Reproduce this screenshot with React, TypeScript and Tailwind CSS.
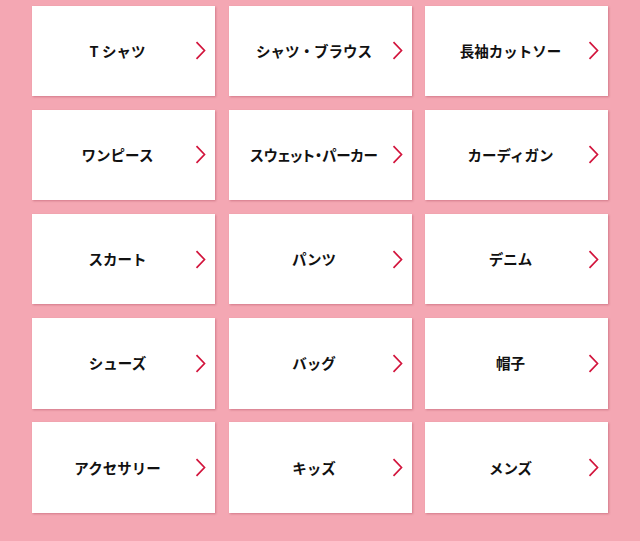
import React from "react";

const items: { t: string; palt?: boolean }[] = [
  { t: "T シャツ" },
  { t: "シャツ・ブラウス" },
  { t: "長袖カットソー" },
  { t: "ワンピース" },
  { t: "スウェット・パーカー", palt: true },
  { t: "カーディガン" },
  { t: "スカート" },
  { t: "パンツ" },
  { t: "デニム" },
  { t: "シューズ" },
  { t: "バッグ" },
  { t: "帽子" },
  { t: "アクセサリー" },
  { t: "キッズ" },
  { t: "メンズ" },
];

function Chevron() {
  return (
    <svg width="11" height="19" viewBox="0 0 11 19" className="shrink-0">
      <path d="M1.5 1.2 L9.5 9.5 L1.5 17.8" fill="none" stroke="#d2143c" strokeWidth="1.7" />
    </svg>
  );
}

export default function App() {
  return (
    <div
      className="w-[640px] h-[541px] bg-[#f4a7b3] px-[32px] pt-[5.5px] overflow-hidden"
      style={{ fontFamily: '"Noto Sans CJK JP", "Noto Sans", sans-serif' }}
    >
      <div className="grid grid-cols-3 gap-x-[13.5px] gap-y-[13.7px]">
        {items.map((it) => (
          <div
            key={it.t}
            className="h-[90.5px] bg-white flex items-center pl-[8px] pr-[9px] shadow-[1px_1px_2px_rgba(150,40,60,0.35)]"
          >
            <span
              className={
                it.palt
                  ? "flex-1 text-center text-[14.5px] font-bold text-[#111] [font-feature-settings:'palt'] whitespace-nowrap"
                  : "flex-1 text-center text-[14.5px] font-bold text-[#111] whitespace-nowrap"
              }
            >
              {it.t}
            </span>
            <Chevron />
          </div>
        ))}
      </div>
    </div>
  );
}
